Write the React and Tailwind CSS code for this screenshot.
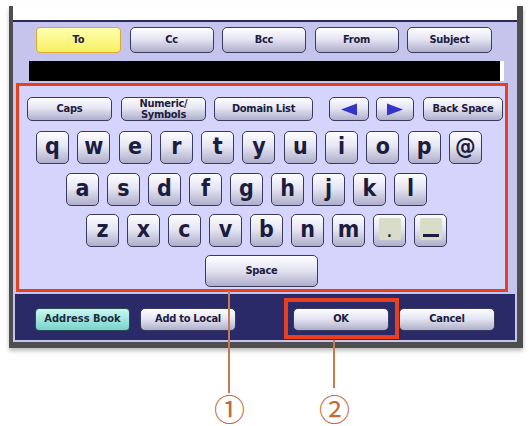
const ROW1 = ['q', 'w', 'e', 'r', 't', 'y', 'u', 'i', 'o', 'p', '@']
const ROW2 = ['a', 's', 'd', 'f', 'g', 'h', 'j', 'k', 'l']
const ROW3 = ['z', 'x', 'c', 'v', 'b', 'n', 'm', '.', '_']

const keyBase =
  'flex items-center justify-center rounded-[5px] border-[1.5px] border-[#3a3a5e] bg-[linear-gradient(to_bottom,#fdfdff_0%,#e6e6f4_45%,#aeaeca_100%)] shadow-[inset_0_1px_0_#ffffff] text-[#1c1c3e]'

function Btn({ children, className = '' }) {
  return (
    <div className={`${keyBase} text-[11px] font-bold tracking-tight ${className}`}>
      {children}
    </div>
  )
}

function LetterKey({ k }) {
  return (
    <div className={`${keyBase} w-[33px] h-[33px] text-[23px] font-bold leading-none pb-[3px]`}>
      {k === '.' ? (
        <span className="flex items-end justify-center w-[22px] h-[22px] bg-[#d9dcc6] rounded-[2px] text-[14px] pb-[1px]">.</span>
      ) : k === '_' ? (
        <span className="flex items-end justify-center w-[22px] h-[22px] bg-[#d9dcc6] rounded-[2px]">
          <span className="block w-[16px] h-[3px] bg-[#1c1c3e] mb-[3px]" />
        </span>
      ) : (
        k
      )}
    </div>
  )
}

function Arrow({ dir }) {
  return (
    <svg width="18" height="13" viewBox="0 0 18 13">
      {dir === 'left' ? (
        <polygon points="1,6.5 17,0.5 17,12.5" fill="#3434c8" />
      ) : (
        <polygon points="17,6.5 1,0.5 1,12.5" fill="#3434c8" />
      )}
    </svg>
  )
}

export default function App() {
  return (
    <div className="relative w-[529px] h-[426px] overflow-hidden bg-white font-['DejaVu_Sans_Condensed','DejaVu_Sans',sans-serif]">
      <div className="pt-[6px] pl-[9px]">
        <div className="w-[514px] border-l-[4px] border-r-[6px] border-b-[6px] border-[#4e4e4e] shadow-[0_3px_4px_rgba(0,0,0,0.25)]">
          <div className="h-[14px] bg-white" />
          <div className="bg-[#c4c4ec] border-t-2 border-[#2a2a5c]">
            {/* recipient tabs */}
            <div className="flex gap-[8.5px] pt-[5px] pl-[23px]">
              <div className="flex items-center justify-center w-[85px] h-[26px] rounded-[4px] border-[1.5px] border-[#e0a838] bg-[linear-gradient(to_bottom,#ffffb0,#f6f060)] text-[11px] font-bold text-[#1c1c3e]">
                To
              </div>
              <Btn className="w-[84px] h-[26px] rounded-[4px]">Cc</Btn>
              <Btn className="w-[84px] h-[26px] rounded-[4px]">Bcc</Btn>
              <Btn className="w-[84px] h-[26px] rounded-[4px]">From</Btn>
              <Btn className="w-[85px] h-[26px] rounded-[4px]">Subject</Btn>
            </div>

            {/* address field */}
            <div className="flex mt-[8px] ml-[16px]">
              <div className="w-[471px] h-[20px] bg-black" />
              <div className="w-[4px] h-[20px] bg-white" />
            </div>

            {/* keyboard */}
            <div className="mt-[2px] ml-[3px] w-[492px] border-[3px] border-[#e8401e] bg-[#d4d4fc] pt-[11px] pb-[2px]">
              <div className="flex items-center pl-[8px]">
                <Btn className="w-[85px] h-[24px]">Caps</Btn>
                <Btn className="ml-[9px] w-[85px] h-[24px] flex-col text-[9.5px] leading-[11px]">
                  <span>Numeric/</span>
                  <span>Symbols</span>
                </Btn>
                <Btn className="ml-[8px] w-[99px] h-[24px]">Domain List</Btn>
                <Btn className="ml-[16px] w-[40px] h-[24px]">
                  <Arrow dir="left" />
                </Btn>
                <Btn className="ml-[7px] w-[38px] h-[24px]">
                  <Arrow dir="right" />
                </Btn>
                <Btn className="ml-[9px] w-[80px] h-[24px]">Back Space</Btn>
              </div>

              <div className="flex gap-[8.3px] pl-[17px] mt-[10px]">
                {ROW1.map(k => <LetterKey key={k} k={k} />)}
              </div>
              <div className="flex gap-[8px] pl-[47px] mt-[9px]">
                {ROW2.map(k => <LetterKey key={k} k={k} />)}
              </div>
              <div className="flex gap-[8px] pl-[67px] mt-[8px]">
                {ROW3.map(k => <LetterKey key={k} k={k} />)}
              </div>
              <div className="pl-[186px] mt-[8px]">
                <Btn className="w-[113px] h-[32px]">Space</Btn>
              </div>
            </div>

            {/* bottom bar */}
            <div className="mt-[2px] ml-[2px] mr-[2px] bg-[#2a2a68] flex items-center pl-[20px] pt-[14px] pb-[9px]">
              <div className="flex items-center justify-center w-[95px] h-[23px] rounded-[4px] border-[1.5px] border-[#2a4a50] bg-[linear-gradient(to_bottom,#c8f8f0,#78d4cc)] text-[11px] font-bold text-[#1c2c3e]">
                Address Book
              </div>
              <Btn className="ml-[10px] w-[96px] h-[23px] rounded-[4px]">Add to Local</Btn>
              <div className="relative ml-[57px]">
                <Btn className="w-[96px] h-[23px] rounded-[4px]">OK</Btn>
                <div className="absolute -left-[9px] -right-[10px] -top-[10px] -bottom-[8px] border-[4px] border-[#e8401e]" />
              </div>
              <Btn className="ml-[10px] w-[96px] h-[23px] rounded-[4px]">Cancel</Btn>
            </div>
            <div className="h-[2px] bg-[#c4c4ec]" />
          </div>
        </div>
      </div>

      {/* callouts */}
      <div className="absolute left-[228px] top-[291px] w-[1.5px] h-[102px] bg-[#c47a52]" />
      <div className="absolute left-[333px] top-[340px] w-[1.5px] h-[48px] bg-[#c47a52]" />
      <span className="absolute left-[214px] top-[392px] text-[31px] leading-none text-[#c46a38] font-['Noto_Sans_CJK_JP',sans-serif]">
        ①
      </span>
      <span className="absolute left-[319px] top-[392px] text-[31px] leading-none text-[#c46a38] font-['Noto_Sans_CJK_JP',sans-serif]">
        ②
      </span>
    </div>
  )
}
